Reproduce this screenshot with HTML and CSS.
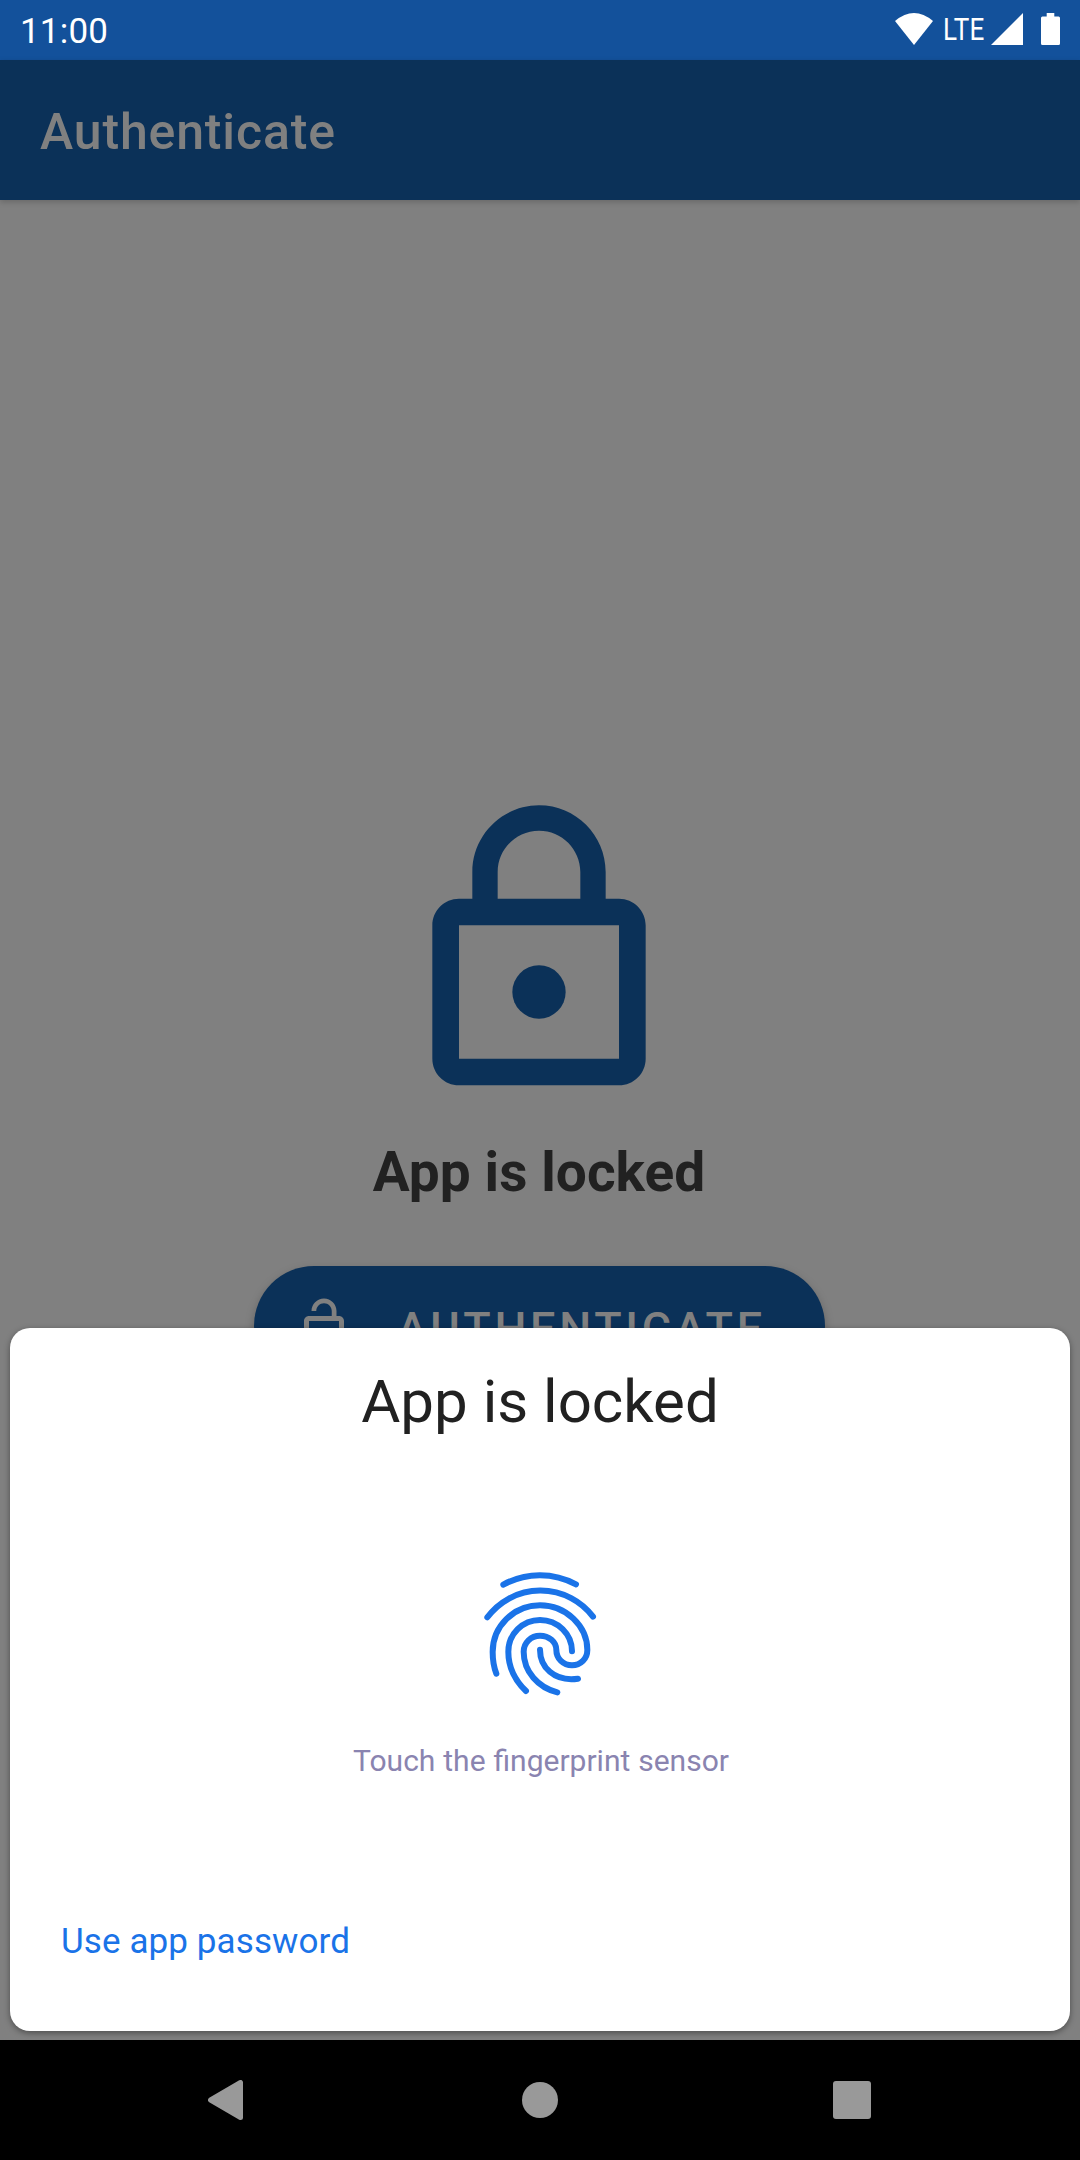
FILE: index.html
```html
<!DOCTYPE html>
<html lang="en">
<head>
<meta charset="utf-8">
<title>Authenticate</title>
<link rel="stylesheet" href="styles.css">
</head>
<body>
<div class="screen">
  <header class="status-bar">
    <span class="clock">11:00</span>
    <svg class="wifi" width="38" height="32" viewBox="0 0 38 32"><path d="M0 8Q19-8 38 8L19 32Z"/></svg>
    <span class="network">LTE</span>
    <svg class="signal" width="32" height="32" viewBox="0 0 32 32"><path d="M32 0V32H0Z"/></svg>
    <svg class="battery" width="19" height="32" viewBox="0 0 20 32" preserveAspectRatio="none"><path d="M6 0h8v3.500h4.500q1.500 0 1.500 1.500v25.500q0 1.500-1.500 1.500h-17q-1.500 0-1.500-1.500v-25.500q0-1.500 1.500-1.500H6Z"/></svg>
  </header>
  <div class="app-bar"><h1 class="app-title">Authenticate</h1></div>
  <main class="content">
    <svg class="lock" width="320" height="320" viewBox="0 0 24 24"><path fill-rule="evenodd" d="M18 8h-1V6c0-2.760-2.240-5-5-5S7 3.240 7 6v2H6c-1.100 0-2 .9-2 2v10c0 1.100.9 2 2 2h12c1.100 0 2-.9 2-2V10c0-1.100-.9-2-2-2zM8.900 6c0-1.710 1.390-3.100 3.100-3.100s3.100 1.390 3.100 3.100v2H8.900V6zM18 20H6V10h12v10z"/><circle cx="12" cy="15" r="2"/></svg>
    <h2 class="locked">App is locked</h2>
    <button class="auth-button">
      <svg width="60" height="60" viewBox="0 0 24 24"><path fill-rule="evenodd" d="M18 8h-1V6c0-2.760-2.240-5-5-5S7 3.240 7 6h1.900c0-1.710 1.390-3.100 3.100-3.100s3.100 1.390 3.100 3.100v2H6c-1.100 0-2 .9-2 2v10c0 1.100.9 2 2 2h12c1.100 0 2-.9 2-2V10c0-1.100-.9-2-2-2zM18 20H6V10h12v10z"/><circle cx="12" cy="15" r="2"/></svg>
      <span class="auth-label">AUTHENTICATE</span>
    </button>
    <section class="sheet">
      <h2 class="sheet-title">App is locked</h2>
      <svg class="fingerprint" width="160" height="160" viewBox="0 0 480 480">
        <path d="M130 104A226 226 0 0 1 348 103"/>
        <path d="M82 202A198 198 0 0 1 399 200"/>
        <path d="M109 371C101 350 98 330 98 306C98 228 162 166 240 166C318 166 382 228 382 300C382 326 362 346 336 346C310 346 289 326 289 300C289 276 267 257 240 257C213 257 191 278 191 305C191 365 235 413 292 427"/>
        <path d="M198 423C164 390 145 350 145 305C145 252 188 210 240 210C293 210 336 252 336 304"/>
        <path d="M240 299C240 350 281 396 354 386"/>
      </svg>
      <p class="hint">Touch the fingerprint sensor</p>
      <a class="password">Use app password</a>
    </section>
  </main>
  <nav class="nav-bar">
    <svg width="36" height="40" viewBox="0 0 36 40"><path d="M32.500 2.500V37.500L2.500 20Z" stroke="#999" stroke-width="5" stroke-linejoin="round"/></svg>
    <svg class="home" width="36" height="36" viewBox="0 0 36 36"><circle cx="18" cy="18" r="18"/></svg>
    <svg width="38" height="38" viewBox="0 0 38 38"><rect width="38" height="38" rx="3"/></svg>
  </nav>
</div>
</body>
</html>
```
FILE: styles.css
```css
* { box-sizing: border-box; margin: 0; }
body { font-family: Roboto, "Liberation Sans", sans-serif; }
svg { display: block; flex: none; }
.screen { width: 1080px; height: 2160px; display: flex; flex-direction: column; overflow: hidden; background: #808080; }
.status-bar { height: 60px; flex: none; display: flex; align-items: flex-start; padding: 13px 20px 0 20px; background: #13519b; color: #fff; fill: #fff; }
.clock { flex: 1; font-size: 35px; line-height: 38px; letter-spacing: .2px; }
.network { font-size: 31px; line-height: 33px; margin: 0 6px 0 10px; width: 42px; white-space: nowrap; letter-spacing: .3px; transform: scaleX(.84); transform-origin: 0 50%; }
.battery { margin-left: 18px; }
.app-bar { height: 140px; flex: none; display: flex; align-items: center; padding: 4px 40px 0; background: #0b3158; box-shadow: 0 2px 6px rgba(0,0,0,.2); z-index: 1; }
.app-title { font-size: 50px; line-height: 60px; font-weight: 500; letter-spacing: .85px; color: #808080; }
.content { flex: 1; position: relative; display: flex; flex-direction: column; align-items: center; padding: 592px 2px 0 0; }
.lock { fill: #0b3158; }
.locked { margin-top: 28px; font-size: 55px; line-height: 64px; font-weight: 700; letter-spacing: .05px; color: #212121; white-space: nowrap; }
.auth-button { margin: 62px 0 0 1px; width: 571px; height: 120px; flex: none; display: flex; align-items: center; padding: 0 0 0 40px; gap: 43px; border: 0; border-radius: 60px; background: #0b3158; color: #808080; fill: #808080; font: 500 45px/54px Roboto, sans-serif; letter-spacing: 3.700px; white-space: nowrap; box-shadow: 0 4px 10px rgba(0,0,0,.25); }
.auth-label { padding-top: 5px; }
.sheet { position: absolute; left: 10px; right: 10px; top: 1128px; height: 703px; display: flex; flex-direction: column; align-items: center; padding-top: 39px; border-radius: 20px; background: #fff; box-shadow: 0 2px 6px rgba(0,0,0,.4); }
.sheet-title { font-size: 60px; line-height: 70px; font-weight: 400; color: #212121; }
.fingerprint { margin-top: 113px; fill: none; stroke: #1a73e8; stroke-width: 18; stroke-linecap: round; stroke-linejoin: round; }
.hint { margin: 33px 0 0 2px; font-size: 30px; line-height: 36px; word-spacing: .5px; color: #8a84b0; }
.password { align-self: flex-start; margin: 143px 0 0 51px; font-size: 35px; line-height: 40px; letter-spacing: .1px; color: #1a73e8; }
.nav-bar { height: 120px; flex: none; display: flex; align-items: center; justify-content: space-between; padding: 0 209px 0 208px; background: #000; fill: #999; }
.home { margin-left: 2px; }
```
